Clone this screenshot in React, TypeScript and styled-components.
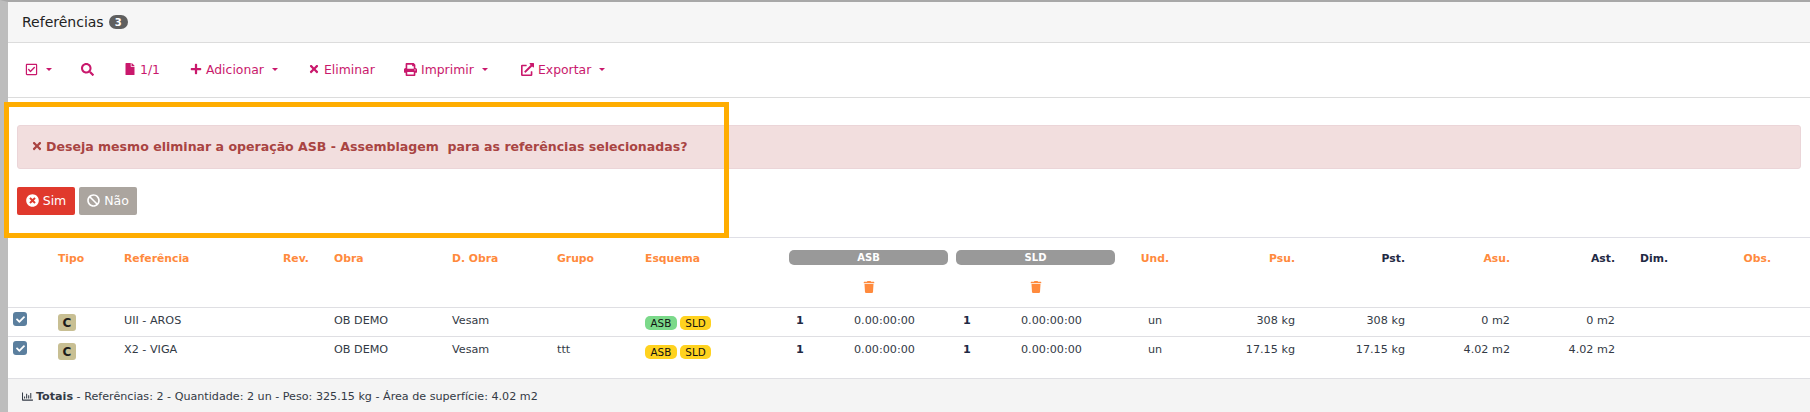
import React from "react";
import styled, { createGlobalStyle } from "styled-components";
import { FaBan, FaCheck, FaExternalLinkAlt, FaFile, FaPlus, FaPrint, FaRegChartBar, FaRegCheckSquare, FaSearch, FaTimes, FaTimesCircle, FaTrash } from "react-icons/fa";

const Global = createGlobalStyle`
  html, body { margin: 0; padding: 0; background: #fff; }
  body {
    font-family: "DejaVu Sans", sans-serif;
    font-size: 11.2px;
    color: #333a45;
    overflow: hidden;
  }
`;

const COLUMNS = "50px 66px 159px 51px 118px 105px 88px 144px 167px 167px 64px 108px 110px 105px 105px 65px 91px 39px";

const Page = styled.div`
  position: relative;
  height: 412px;
  border-left: 8px solid #bdbdbd;
  border-top: 2px solid #a8a8a8;
  box-sizing: border-box;
  display: flex;
  flex-direction: column;
`;

const Heading = styled.div`
  height: 40px;
  display: flex;
  align-items: center;
  gap: 5px;
  padding-left: 14px;
  background: #f6f6f6;
  border-bottom: 1px solid #dcdcdc;
  font-size: 14px;
  color: #222;
`;

const CountBadge = styled.span`
  width: 19px;
  height: 14px;
  border-radius: 7px;
  background: #5f5f5f;
  color: #fff;
  font-size: 10px;
  font-weight: bold;
  display: flex;
  align-items: center;
  justify-content: center;
`;

const Toolbar = styled.div`
  height: 55px;
  box-sizing: border-box;
  display: flex;
  align-items: center;
  padding: 0 0 2px 17px;
  border-bottom: 1px solid #dcdcdc;
  color: #c9186c;
  font-size: 12.4px;
`;

const ToolButton = styled.span<{ $width: number }>`
  width: ${(p) => p.$width}px;
  display: flex;
  align-items: center;
  gap: 4px;
  white-space: nowrap;
  svg { flex: none; }
`;

const Caret = styled.span`
  width: 0;
  height: 0;
  margin-left: 4px;
  border-left: 3px solid transparent;
  border-right: 3px solid transparent;
  border-top: 3px solid #c9186c;
`;

const Confirm = styled.div`
  padding: 27px 9px 0 9px;
  height: 112px;
  box-sizing: content-box;
`;

const Alert = styled.div`
  height: 44px;
  box-sizing: border-box;
  display: flex;
  align-items: center;
  gap: 3px;
  padding: 0 0 2px 13px;
  background: #f2dede;
  border: 1px solid #ebd5d8;
  border-radius: 3px;
  color: #a94442;
  font-size: 12.55px;
  font-weight: bold;
  white-space: pre;
`;

const Actions = styled.div`
  display: flex;
  gap: 4px;
  margin-top: 18px;
`;

const ActionButton = styled.span<{ $bg: string }>`
  width: 58px;
  height: 28px;
  box-sizing: border-box;
  padding-bottom: 1px;
  border-radius: 2px;
  background: ${(p) => p.$bg};
  color: #fff;
  font-size: 12.5px;
  display: flex;
  align-items: center;
  justify-content: center;
  gap: 4px;
`;

const Highlight = styled.div`
  position: absolute;
  left: -4px;
  top: 100px;
  width: 725px;
  height: 136px;
  box-sizing: border-box;
  border: 5px solid #ffad00;
  pointer-events: none;
`;

const Table = styled.div`
  flex: 1;
  display: flex;
  flex-direction: column;
  border-top: 1px solid #dfdfe6;
`;

const HeaderRow = styled.div`
  height: 69px;
  display: grid;
  grid-template-columns: ${COLUMNS};
  border-bottom: 1px solid #dfdfe3;
  font-size: 10.8px;
`;

const BodyRow = styled.div<{ $height: number }>`
  height: ${(p) => p.$height}px;
  box-sizing: border-box;
  display: grid;
  grid-template-columns: ${COLUMNS};
  align-items: start;
  padding-top: 6px;
  border-bottom: 1px solid #dfdfe3;
  line-height: 14px;
`;

const Th = styled.div<{ $align?: string; $dark?: boolean; $inset?: boolean }>`
  padding-top: 14px;
  padding-left: ${(p) => (p.$inset ? "25px" : "0")};
  font-weight: bold;
  color: ${(p) => (p.$dark ? "#1f2a44" : "#ff8a3d")};
  text-align: ${(p) => p.$align || "left"};
`;

const OperationHead = styled.div`
  padding-top: 12px;
  width: 159px;
  display: flex;
  flex-direction: column;
  align-items: center;
  gap: 16px;
  color: #ff8a3d;
  font-size: 13px;
`;

const OperationName = styled.div`
  width: 100%;
  height: 15px;
  border-radius: 5px;
  background: #999;
  color: #fff;
  font-size: 10px;
  font-weight: bold;
  line-height: 15px;
  text-align: center;
`;

const Td = styled.div<{ $align?: string }>`
  text-align: ${(p) => p.$align || "left"};
  white-space: nowrap;
`;

const RowCheck = styled.span`
  width: 14px;
  height: 14px;
  margin: -2px 0 0 5px;
  border-radius: 3px;
  background: #5b7f9e;
  color: #fff;
  display: flex;
  align-items: center;
  justify-content: center;
`;

const TypeBadge = styled.span`
  display: flex;
  width: 18px;
  height: 17px;
  border-radius: 3px;
  background: #c8bf93;
  color: #1c1c1c;
  font-size: 12px;
  font-weight: bold;
  align-items: center;
  justify-content: center;
`;

const Pills = styled.div`
  display: flex;
  gap: 3px;
  margin-top: 2px;
`;

const Pill = styled.span<{ $bg: string }>`
  height: 14px;
  padding: 0 5.5px;
  border-radius: 5px;
  background: ${(p) => p.$bg};
  color: #111;
  font-size: 10.4px;
  line-height: 14px;
`;

const Operation = styled.div`
  display: grid;
  grid-template-columns: 22px 1fr;
`;

const Qty = styled.b`
  color: #1f2a44;
  text-align: center;
`;

const Duration = styled.span`
  padding-left: 43px;
`;

const Footer = styled.div`
  flex: 1;
  display: flex;
  align-items: center;
  padding: 1px 0 0 14px;
  background: #f4f4f4;
  font-size: 11.15px;
  white-space: pre;
  svg { margin-right: 3px; }
`;

const GREEN = "#7bd98a";
const YELLOW = "#ffd21f";

type Referencia = {
  ref: string;
  grupo: string;
  asb: string;
  psu: string;
  pst: string;
  asu: string;
  ast: string;
  height: number;
};

const rows: Referencia[] = [
  { ref: "UII - AROS", grupo: "", asb: GREEN, psu: "308 kg", pst: "308 kg", asu: "0 m2", ast: "0 m2", height: 29 },
  { ref: "X2 - VIGA", grupo: "ttt", asb: YELLOW, psu: "17.15 kg", pst: "17.15 kg", asu: "4.02 m2", ast: "4.02 m2", height: 42 },
];

const App = () => {
  return (
    <Page>
      <Global />
      <Heading>
        Referências <CountBadge>3</CountBadge>
      </Heading>
      <Toolbar>
        <ToolButton $width={56}><FaRegCheckSquare size={13} /><Caret /></ToolButton>
        <ToolButton $width={43}><FaSearch size={13} /></ToolButton>
        <ToolButton $width={66}><FaFile size={12} />1/1</ToolButton>
        <ToolButton $width={118}><FaPlus size={12} />Adicionar<Caret /></ToolButton>
        <ToolButton $width={96}><FaTimes size={12} />Eliminar</ToolButton>
        <ToolButton $width={117}><FaPrint size={13} />Imprimir<Caret /></ToolButton>
        <ToolButton $width={100}><FaExternalLinkAlt size={13} />Exportar<Caret /></ToolButton>
      </Toolbar>
      <Confirm>
        <Alert>
          <FaTimes size={12} />
          {"Deseja mesmo eliminar a operação ASB - Assemblagem  para as referências selecionadas?"}
        </Alert>
        <Actions>
          <ActionButton $bg="#e0392d"><FaTimesCircle size={13} />Sim</ActionButton>
          <ActionButton $bg="#aba59f"><FaBan size={13} />Não</ActionButton>
        </Actions>
      </Confirm>
      <Highlight />
      <Table>
        <HeaderRow>
          <Th />
          <Th>Tipo</Th>
          <Th>Referência</Th>
          <Th>Rev.</Th>
          <Th>Obra</Th>
          <Th>D. Obra</Th>
          <Th>Grupo</Th>
          <Th>Esquema</Th>
          <OperationHead><OperationName>ASB</OperationName><FaTrash size={12} /></OperationHead>
          <OperationHead><OperationName>SLD</OperationName><FaTrash size={12} /></OperationHead>
          <Th $align="center">Und.</Th>
          <Th $align="right">Psu.</Th>
          <Th $align="right" $dark>Pst.</Th>
          <Th $align="right">Asu.</Th>
          <Th $align="right" $dark>Ast.</Th>
          <Th $dark $inset>Dim.</Th>
          <Th $align="right">Obs.</Th>
          <Th />
        </HeaderRow>
        {rows.map((row) => (
          <BodyRow key={row.ref} $height={row.height}>
            <Td><RowCheck><FaCheck size={9} /></RowCheck></Td>
            <Td><TypeBadge>C</TypeBadge></Td>
            <Td>{row.ref}</Td>
            <Td />
            <Td>OB DEMO</Td>
            <Td>Vesam</Td>
            <Td>{row.grupo}</Td>
            <Td><Pills><Pill $bg={row.asb}>ASB</Pill><Pill $bg={YELLOW}>SLD</Pill></Pills></Td>
            <Operation><Qty>1</Qty><Duration>0.00:00:00</Duration></Operation>
            <Operation><Qty>1</Qty><Duration>0.00:00:00</Duration></Operation>
            <Td $align="center">un</Td>
            <Td $align="right">{row.psu}</Td>
            <Td $align="right">{row.pst}</Td>
            <Td $align="right">{row.asu}</Td>
            <Td $align="right">{row.ast}</Td>
            <Td />
            <Td />
            <Td />
          </BodyRow>
        ))}
        <Footer>
          <FaRegChartBar size={11} />
          <b>Totais</b>
          {" - Referências: 2 - Quantidade: 2 un - Peso: 325.15 kg - Área de superfície: 4.02 m2"}
        </Footer>
      </Table>
    </Page>
  );
};

export default App;
